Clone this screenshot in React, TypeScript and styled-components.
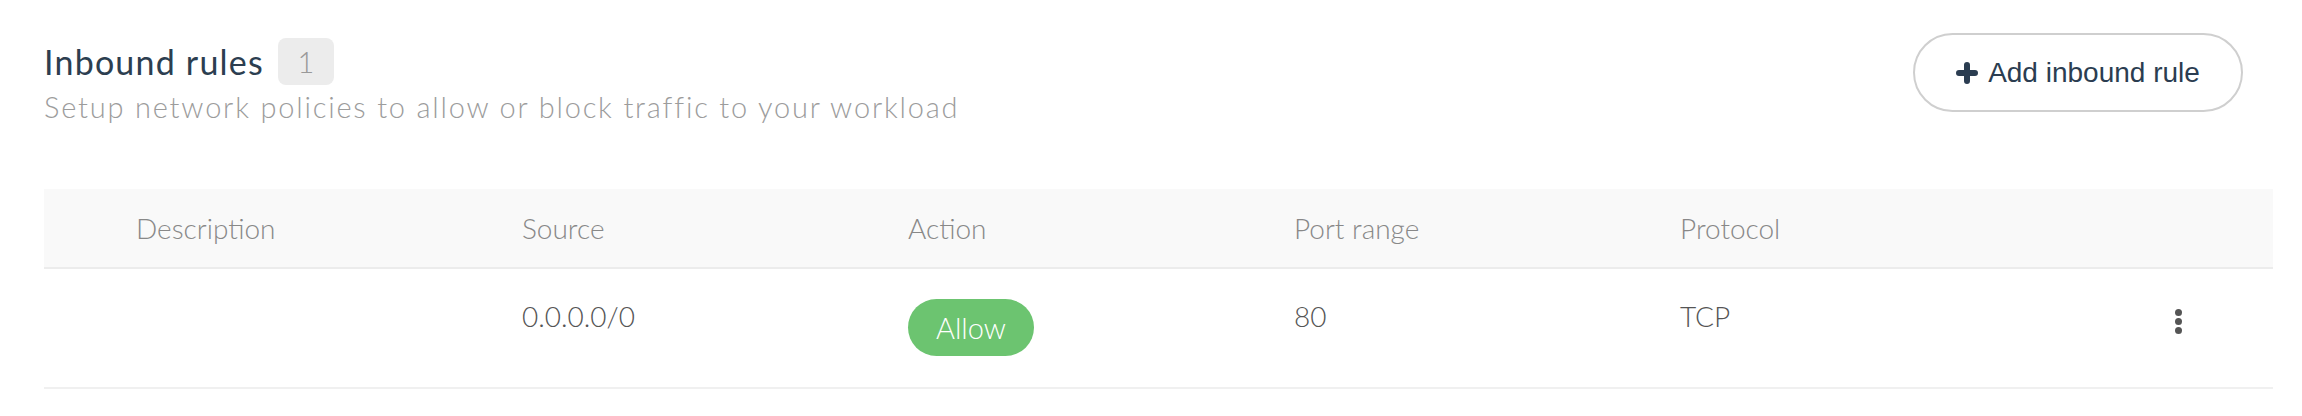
import styled, { createGlobalStyle } from 'styled-components'

const GlobalStyle = createGlobalStyle`
  body {
    margin: 0;
    background: #fff;
    font-family: Lato, "Open Sans", sans-serif;
  }
`

const Page = styled.div`
  padding: 33px 29px 0 44px;
`

const Header = styled.header`
  display: flex;
  justify-content: space-between;
  align-items: flex-start;
  padding-right: 30px;
`

const TitleBlock = styled.div`
  display: flex;
  flex-direction: column;
  padding-top: 5px;
`

const TitleRow = styled.div`
  display: flex;
  align-items: center;
  gap: 14px;
`

const Title = styled.h2`
  margin: 0;
  font-size: 34px;
  font-weight: 400;
  letter-spacing: 1.2px;
  line-height: 47px;
  color: #2c3e50;
`

const Count = styled.span`
  display: inline-flex;
  align-items: center;
  justify-content: center;
  width: 56px;
  height: 47px;
  border-radius: 8px;
  background: #ececec;
  color: #999;
  font-size: 29px;
  font-weight: 300;
`

const Subtitle = styled.p`
  margin: 4px 0 0;
  font-size: 29px;
  font-weight: 300;
  letter-spacing: 1.8px;
  line-height: 36px;
  color: #9c9c9c;
`

const AddButton = styled.button`
  display: flex;
  align-items: center;
  justify-content: center;
  gap: 10px;
  width: 330px;
  height: 79px;
  border: 2px solid #cfcfcf;
  border-radius: 40px;
  background: #fff;
  color: #2b3d51;
  font-family: "Liberation Sans", Arial, sans-serif;
  font-size: 28px;
  cursor: pointer;
`

const Table = styled.div`
  margin-top: 64px;
`

const Row = styled.div<{ $head?: boolean }>`
  display: grid;
  grid-template-columns: repeat(5, 386px) 1fr;
  align-items: ${p => (p.$head ? 'center' : 'start')};
  padding-left: 92px;
  height: ${p => (p.$head ? '78px' : '88px')};
  padding-top: ${p => (p.$head ? '0' : '30px')};
  background: ${p => (p.$head ? '#f9f9f9' : '#fff')};
  border-bottom: 2px solid ${p => (p.$head ? '#ececec' : '#f0f0f0')};
`

const HeadCell = styled.div`
  font-size: 28px;
  font-weight: 300;
  color: #888;
  line-height: 34px;
`

const Cell = styled.div`
  font-size: 28px;
  font-weight: 300;
  color: #555;
  line-height: 34px;
`

const Pill = styled.span`
  display: inline-block;
  height: 57px;
  line-height: 57px;
  padding: 0 28px;
  border-radius: 29px;
  background: #6cc470;
  color: #fff;
  font-size: 29px;
  font-weight: 300;
`

const MenuCell = styled.div`
  display: flex;
  justify-content: flex-end;
  padding-right: 91px;
  padding-top: 10px;
`

function PlusIcon() {
  return (
    <svg width="22" height="22" viewBox="0 0 22 22">
      <path d="M11 3v16M3 11h16" stroke="currentColor" strokeWidth="6" strokeLinecap="round" />
    </svg>
  )
}

function KebabIcon() {
  return (
    <svg width="7" height="25" viewBox="0 0 7 25">
      <circle cx="3.5" cy="3.5" r="3.5" fill="#555" />
      <circle cx="3.5" cy="12.5" r="3.5" fill="#555" />
      <circle cx="3.5" cy="21.5" r="3.5" fill="#555" />
    </svg>
  )
}

const columns = ['Description', 'Source', 'Action', 'Port range', 'Protocol']

export default function App() {
  return (
    <>
      <GlobalStyle />
      <Page>
        <Header>
          <TitleBlock>
            <TitleRow>
              <Title>Inbound rules</Title>
              <Count>1</Count>
            </TitleRow>
            <Subtitle>Setup network policies to allow or block traffic to your workload</Subtitle>
          </TitleBlock>
          <AddButton>
            <PlusIcon />
            Add inbound rule
          </AddButton>
        </Header>
        <Table>
          <Row $head>
            {columns.map(c => (
              <HeadCell key={c}>{c}</HeadCell>
            ))}
            <div />
          </Row>
          <Row>
            <Cell></Cell>
            <Cell>0.0.0.0/0</Cell>
            <div>
              <Pill>Allow</Pill>
            </div>
            <Cell>80</Cell>
            <Cell>TCP</Cell>
            <MenuCell>
              <KebabIcon />
            </MenuCell>
          </Row>
        </Table>
      </Page>
    </>
  )
}
